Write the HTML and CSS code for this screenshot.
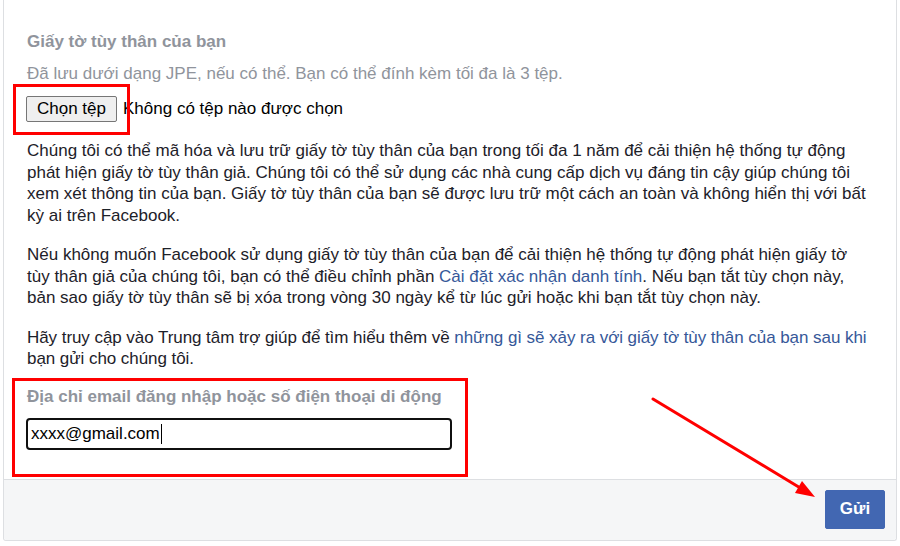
FILE: index.html
```html
<!DOCTYPE html>
<html lang="vi">
<head>
<meta charset="utf-8">
<title>Giấy tờ tùy thân</title>
<link rel="stylesheet" href="styles.css">
</head>
<body>
<div class="card">
  <div class="card-body">
    <div class="heading">Giấy tờ tùy thân của bạn</div>
    <div class="subtitle">Đã lưu dưới dạng JPE, nếu có thể. Bạn có thể đính kèm tối đa là 3 tệp.</div>
    <div class="file-row">
      <span class="file-wrap">
        <button class="file-btn" type="button">Chọn tệp</button>
        <span class="mark mark-file"></span>
      </span>
      <span class="file-status">Không có tệp nào được chọn</span>
    </div>
    <p class="para">Chúng tôi có thể mã hóa và lưu trữ giấy tờ tùy thân của bạn trong tối đa 1 năm để cải thiện hệ thống tự động phát hiện giấy tờ tùy thân giả. Chúng tôi có thể sử dụng các nhà cung cấp dịch vụ đáng tin cậy giúp chúng tôi xem xét thông tin của bạn. Giấy tờ tùy thân của bạn sẽ được lưu trữ một cách an toàn và không hiển thị với bất kỳ ai trên Facebook.</p>
    <p class="para">Nếu không muốn Facebook sử dụng giấy tờ tùy thân của bạn để cải thiện hệ thống tự động phát hiện giấy tờ tùy thân giả của chúng tôi, bạn có thể điều chỉnh phần <a class="link" href="#">Cài đặt xác nhận danh tính</a>. Nếu bạn tắt tùy chọn này, bản sao giấy tờ tùy thân sẽ bị xóa trong vòng 30 ngày kể từ lúc gửi hoặc khi bạn tắt tùy chọn này.</p>
    <p class="para para-tight">Hãy truy cập vào Trung tâm trợ giúp để tìm hiểu thêm về <a class="link" href="#">những gì sẽ xảy ra với giấy tờ tùy thân của bạn sau khi</a> bạn gửi cho chúng tôi.</p>
    <div class="field">
      <div class="label">Địa chỉ email đăng nhập hoặc số điện thoại di động</div>
      <div class="input">xxxx@gmail.com<span class="caret"></span></div>
      <span class="mark mark-field"></span>
    </div>
  </div>
  <div class="card-footer">
    <button class="submit" type="button">Gửi</button>
  </div>
</div>
<svg class="arrow" width="900" height="546" viewBox="0 0 900 546" aria-hidden="true">
  <line x1="653" y1="399" x2="802" y2="489" stroke="#ff0000" stroke-width="3" stroke-linecap="round"/>
  <polygon points="815,497 802,481 795,493" fill="#ff0000"/>
</svg>
</body>
</html>
```

FILE: styles.css
```css
html, body {
  margin: 0;
  padding: 0;
  background: #ffffff;
}

body {
  font-family: "Liberation Sans", Arial, Helvetica, sans-serif;
  color: #1d2129;
  width: 900px;
  height: 546px;
  position: relative;
  overflow: hidden;
}

.card {
  margin: 0 3px;
  border: 1px solid #dddfe2;
  border-top: none;
  border-radius: 0 0 3px 3px;
  background: #ffffff;
}

.card-body {
  padding: 32px 24px 29px 23px;
}

.heading {
  font-size: 17px;
  font-weight: bold;
  line-height: 20px;
  color: #90949c;
}

.subtitle {
  margin-top: 12px;
  font-size: 17px;
  line-height: 20px;
  color: #90949c;
}

.file-row {
  margin-top: 12px;
  display: flex;
  align-items: center;
  height: 26px;
}

.file-wrap {
  position: relative;
  display: inline-flex;
}

.file-btn {
  font-family: "Liberation Sans", Arial, sans-serif;
  font-size: 17px;
  color: #000000;
  height: 26px;
  width: 91px;
  margin: 0 0 0 -1px;
  padding: 0;
  background: #efefef;
  border: 1px solid #767676;
  border-radius: 2px;
}

.file-status {
  margin-left: 6px;
  font-size: 17px;
  color: #000000;
}

.para {
  margin: 18px 0 0 0;
  font-size: 17px;
  line-height: 21.5px;
}

.para-tight {
  letter-spacing: -0.06px;
  margin-right: -4px;
}

.link {
  color: #365899;
  text-decoration: none;
}

.field {
  position: relative;
  margin-top: 17px;
  width: 425px;
}

.label {
  font-size: 17px;
  font-weight: bold;
  line-height: 20px;
  color: #90949c;
  white-space: nowrap;
}

.input {
  margin-top: 11px;
  margin-left: -1px;
  height: 28px;
  box-sizing: content-box;
  border: 2px solid #101010;
  border-radius: 4px;
  padding: 0 0 0 3px;
  display: flex;
  align-items: center;
  font-size: 17px;
  color: #000000;
}

.caret {
  display: inline-block;
  width: 1px;
  height: 20px;
  background: #000000;
  margin-left: 1px;
}

.mark {
  position: absolute;
  border: 3px solid #ff0000;
  pointer-events: none;
}

.mark-file {
  left: -14px;
  top: -12px;
  width: 111px;
  height: 45px;
}

.mark-field {
  left: -15px;
  top: -9px;
  width: 450px;
  height: 93px;
}

.card-footer {
  border-top: 1px solid #dddfe2;
  background: #f5f6f7;
  padding: 10px 11px 11px 11px;
  display: flex;
  justify-content: flex-end;
  border-radius: 0 0 3px 3px;
}

.submit {
  font-family: "Liberation Sans", Arial, sans-serif;
  font-size: 17px;
  font-weight: bold;
  color: #ffffff;
  background: #4267b2;
  border: 1px solid #4267b2;
  border-radius: 2px;
  height: 39px;
  width: 60px;
  padding: 0;
}

.arrow {
  position: absolute;
  left: 0;
  top: 0;
  pointer-events: none;
}
```
